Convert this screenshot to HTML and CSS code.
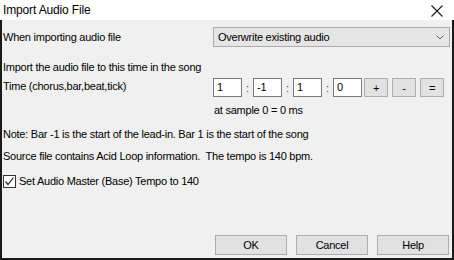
FILE: index.html
```html
<html>
<head>
	<link rel="stylesheet" href="styles.css">
</head>
<body>
  <div class="dialog">

    <div class="titlebar">
      <span class="title">Import Audio File</span>
      <svg class="close" width="12" height="12" viewBox="0 0 12 12"><path d="M0.5 0.5 L11.5 11.5 M11.5 0.5 L0.5 11.5" stroke="#1a1a1a" stroke-width="1.1" fill="none"/></svg>
    </div>

    <div class="content">

      <div class="row first">
        <div class="label">When importing audio file</div>
        <div class="combo">
          <span>Overwrite existing audio</span>
          <svg width="8" height="5" viewBox="0 0 8 5"><path d="M0.5 0.5 L4 4 L7.5 0.5" stroke="#606060" stroke-width="1" fill="none"/></svg>
        </div>
      </div>

      <div class="line heading">Import the audio file to this time in the song</div>

      <div class="row timerow">
        <div class="label">Time (chorus,bar,beat,tick)</div>
        <div class="timebox">
          <div class="field">1</div><div class="colon">:</div>
          <div class="field">-1</div><div class="colon">:</div>
          <div class="field">1</div><div class="colon">:</div>
          <div class="field">0</div>
          <div class="smallbtns">
            <button class="small">+</button>
            <button class="small">-</button>
            <button class="small">=</button>
          </div>
        </div>
      </div>

      <div class="line sample">at sample 0 = 0 ms</div>

      <div class="line note">Note: Bar -1 is the start of the lead-in. Bar 1 is the start of the song</div>

      <div class="line source">Source file contains Acid Loop information.&nbsp; The tempo is 140 bpm.</div>

      <div class="check">
        <div class="box">
          <svg width="11" height="11" viewBox="0 0 11 11"><path d="M1.5 5.5 L4 8.5 L9.5 1.5" stroke="#222" stroke-width="1.2" fill="none"/></svg>
        </div>
        <span>Set Audio Master (Base) Tempo to 140</span>
      </div>

      <div class="buttons">
        <button>OK</button>
        <button>Cancel</button>
        <button>Help</button>
      </div>

    </div>
  </div>
</body>
</html>
```

FILE: styles.css
```css
body {
	margin: 0;
	background: #ffffff;
	font-family: "Liberation Sans", Arial, sans-serif;
	font-size: 11px;
	letter-spacing: -0.25px;
	color: #000;
}

.dialog {
	width: 454px;
	height: 260px;
	display: flex;
	flex-direction: column;
}

.titlebar {
	height: 20px;
	background: #ffffff;
	display: flex;
	align-items: center;
	justify-content: space-between;
	padding: 0 11px 0 3px;
}

.title {
	font-size: 12px;
	letter-spacing: -0.15px;
}

.close {
	margin-top: 1px;
}

.content {
	flex: 1;
	background: #f0f0f0;
	border-left: 2px solid #1a1a1a;
	border-right: 2px solid #1a1a1a;
	border-bottom: 2px solid #1a1a1a;
	padding: 0 0 3px 1px;
	display: flex;
	flex-direction: column;
}

.row {
	display: flex;
}

.label {
	width: 210px;
	line-height: 14px;
}

.first {
	margin-top: 7px;
	align-items: center;
}

.combo {
	width: 237px;
	height: 20px;
	box-sizing: border-box;
	background: #e5e5e5;
	border: 1px solid #acacac;
	display: flex;
	align-items: center;
	justify-content: space-between;
	padding: 0 5px 0 4px;
}

.line {
	line-height: 14px;
}

.heading {
	margin-top: 13px;
}

.timerow {
	margin-top: 4px;
}

.timerow .label {
	padding-top: 1px;
}

.timebox {
	display: flex;
	align-items: center;
}

.field {
	width: 29px;
	height: 19px;
	box-sizing: border-box;
	background: #fff;
	border: 1px solid #7a7a7a;
	padding-left: 3px;
	line-height: 17px;
}

.colon {
	width: 11px;
	text-align: center;
	color: #444;
}

.smallbtns {
	display: flex;
	gap: 4px;
	margin-left: 2px;
}

button {
	font-family: "Liberation Sans", Arial, sans-serif;
	font-size: 11px;
	letter-spacing: -0.25px;
	background: #e1e1e1;
	border: 1px solid #adadad;
	color: #000;
	padding: 0;
	margin: 0;
}

.small {
	width: 24px;
	height: 19px;
}

.sample {
	margin-top: 6px;
	padding-left: 211px;
}

.note {
	margin-top: 10px;
}

.source {
	margin-top: 8px;
}

.check {
	margin-top: 11px;
	display: flex;
	align-items: center;
	height: 14px;
}

.box {
	width: 13px;
	height: 13px;
	box-sizing: border-box;
	border: 1px solid #333;
	background: #fff;
	margin-right: 3px;
	display: flex;
	align-items: center;
	justify-content: center;
}

.buttons {
	margin-top: auto;
	display: flex;
	justify-content: flex-end;
	gap: 9px;
	padding-right: 3px;
}

.buttons button {
	width: 72px;
	height: 20px;
}
```
